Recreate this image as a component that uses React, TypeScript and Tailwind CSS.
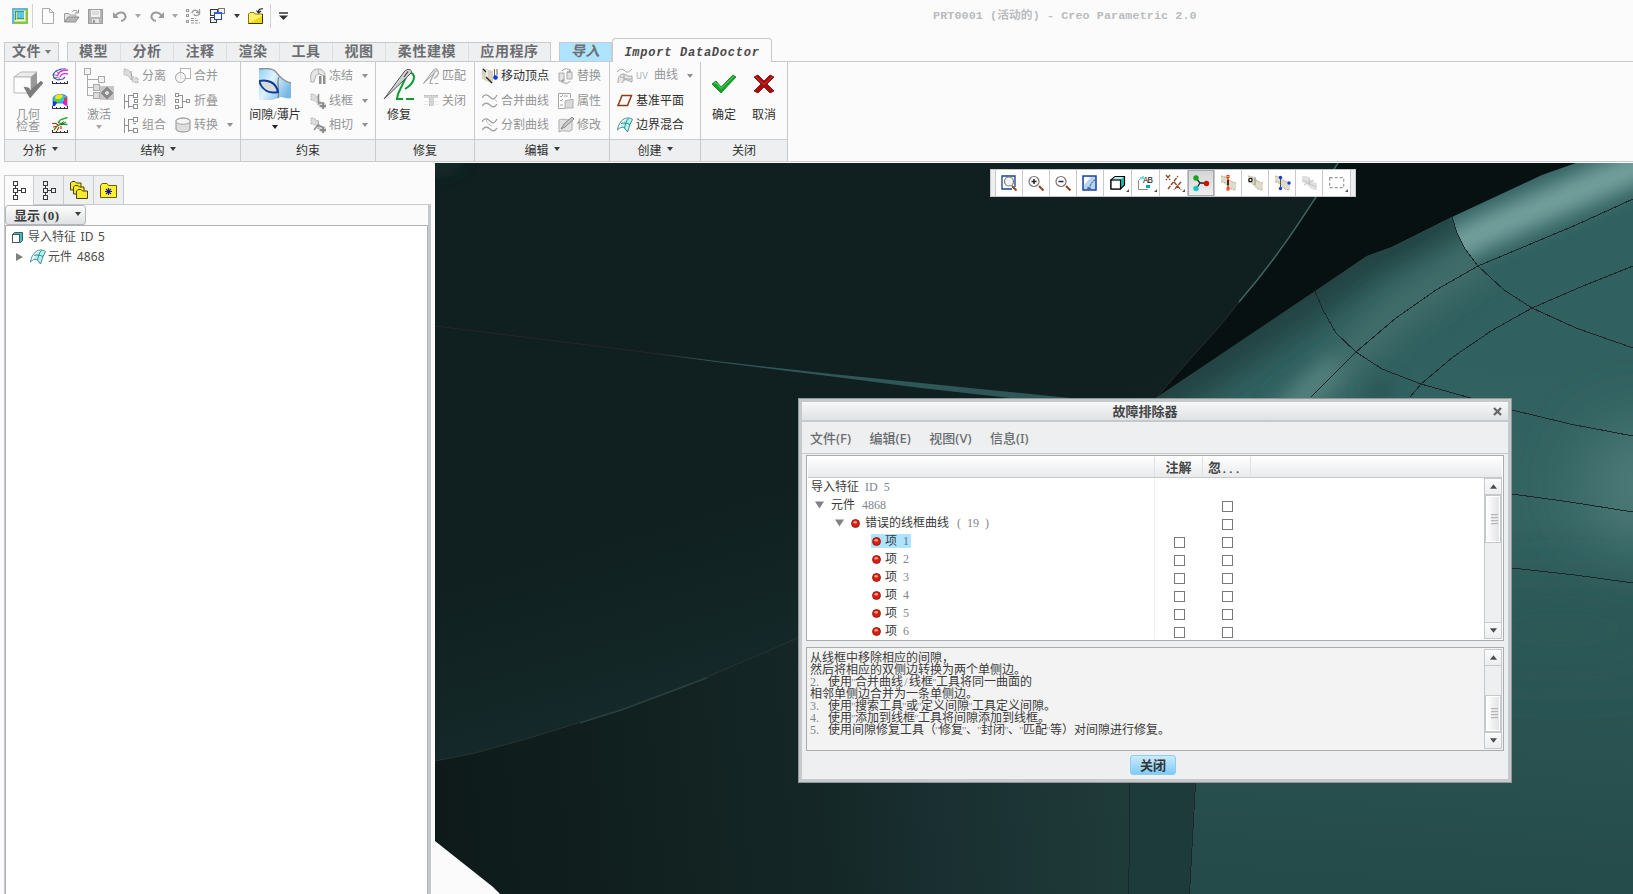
import React from "react";

type P = { className?: string };

const CJK = "font-['Liberation_Serif','Noto_Sans_CJK_SC',sans-serif]";

/* ---------- small helpers ---------- */

function Svg({ w = 16, h = 16, vw, vh, className = "", crisp = false, children }: {
  w?: number; h?: number; vw?: number; vh?: number; className?: string; crisp?: boolean; children: React.ReactNode;
}) {
  return (
    <svg
      width={w}
      height={h}
      viewBox={`0 0 ${vw ?? w} ${vh ?? h}`}
      fill="none"
      className={`shrink-0 ${className}`}
      shapeRendering={crisp ? "crispEdges" : undefined}
    >
      {children}
    </svg>
  );
}

function Down({ c = "#3b3b3b", className = "", w = 6, h = 4 }: { c?: string; w?: number; h?: number } & P) {
  return (
    <Svg w={w} h={h} vw={6} vh={4} className={className}>
      <path d="M0 0H6L3 4Z" fill={c} />
    </Svg>
  );
}

/* ---------- quick access icons ---------- */

const AppIcon = () => (
  <Svg crisp>
    <rect width="16" height="16" fill="#63b5dd" />
    <path d="M2 16V13H13V1H16V16Z" fill="#8bc53f" />
    <rect x="2" y="2" width="12" height="12" fill="#b9dc8c" />
    <rect x="3" y="3" width="10" height="10" fill="#f2fae6" />
    <rect x="3" y="3" width="9" height="9" fill="#2a8fc0" />
    <rect x="5" y="4" width="7" height="6" fill="#5ec6e4" />
    <path d="M4 4V11H12" stroke="#d9e85a" />
  </Svg>
);
const NewIcon = ({ className }: P) => (
  <Svg w={14} h={16} className={className}>
    <path d="M1.500 .5H8.500L12.500 4.500V15.500H1.500Z M8.500 .5V4.500H12.500" stroke="#a9abad" fill="#fff" />
  </Svg>
);
const OpenIcon = ({ className }: P) => (
  <Svg className={className}>
    <path d="M.5 14V5.500H5L6 7H12V9" stroke="#a0a0a0" fill="#e2e2e2" />
    <path d="M.5 14L4 9H15L11.500 14Z" fill="#b5b5b5" stroke="#8f8f8f" />
    <path d="M8 4C9 2 12 1.500 14 4.500M14.500 1.500V5H11" stroke="#8f8f8f" />
  </Svg>
);
const SaveIcon = ({ className }: P) => (
  <Svg className={className}>
    <rect x=".5" y="1.500" width="14" height="14" fill="#b3b5b7" stroke="#9a9c9e" />
    <rect x="3" y="2" width="9" height="7" fill="#f0f0f0" />
    <path d="M4 4H11M4 6H11" stroke="#c8c8c8" />
    <rect x="4" y="11" width="7" height="4" fill="#e4e4e4" />
    <rect x="5" y="12" width="2" height="3" fill="#999" />
  </Svg>
);
const UndoIcon = ({ className }: P) => (
  <Svg className={className}>
    <path d="M1 4V10H7Z" fill="#9b9b9b" />
    <path d="M3.500 7.500C6 4 11 3.500 13 6.500C14.600 9.500 12.500 12.500 9 13" stroke="#9b9b9b" strokeWidth="2" />
  </Svg>
);
const RegenIcon = ({ className }: P) => (
  <Svg className={className}>
    <g stroke="#999">
      <rect x=".5" y="1.500" width="2" height="2" /><rect x=".5" y="6.500" width="2" height="2" /><rect x=".5" y="12.500" width="2" height="2" />
      <path d="M5 10.500H10M5 12.500H13M5 15H14" strokeDasharray="3 1" />
      <path d="M6 5C7 1.500 10 1.500 12 3.500M13.500 1V4.500H10M14 5C13 8 9 8.500 7.500 6" strokeWidth="1.300" />
    </g>
  </Svg>
);
const WindowsIcon = ({ className }: P) => (
  <Svg className={className} crisp>
    <rect x=".5" y="1.500" width="7" height="6" fill="#eee" stroke="#3a3a3a" />
    <rect x="8.500" y=".5" width="6" height="5" fill="#eee" stroke="#777" />
    <rect x=".5" y="9.500" width="6" height="5" fill="#eee" stroke="#3a3a3a" />
    <rect x="4.500" y="4.500" width="7" height="7" fill="#fff" stroke="#1c49b8" />
    <rect x="4" y="4" width="8" height="2" fill="#2a62dc" />
  </Svg>
);
const CloseFolder = ({ className }: P) => (
  <Svg className={className}>
    <path d="M.5 15.500V6L2 4.500H6L7 6H14.500V15.500Z" fill="#fff36b" stroke="#8a7a00" />
    <path d="M1 15L14 15V8Z" fill="#ecd914" />
    <path d="M.5 15.500H14.500V6" stroke="#3d3600" />
    <path d="M15 .8C12 .5 10.500 1.500 10.500 4M8.500 2.500L10.500 5L13 3" stroke="#222" strokeWidth="1.200" />
  </Svg>
);

/* ---------- ribbon icons ---------- */

const GeomCheck = () => (
  <Svg w={30} h={30}>
    <path d="M1 8L8 3H24L18 8Z" fill="#ececec" stroke="#b9b9b9" />
    <path d="M1 8H18V24H1Z" fill="#fdfdfd" stroke="#b9b9b9" />
    <path d="M18 8L24 3V18L18 24Z" fill="#9a9a9a" />
    <path d="M11 18L16 19L17 22L28 12L30 14L17 29Z" fill="#7c7c7c" stroke="#696969" strokeWidth=".5" />
  </Svg>
);
const Comb = ({ children }: { children: React.ReactNode }) => (
  <Svg>
    {children}
    <path d="M0 15.500H16M.5 13V16M4.500 14V16M8.500 14V16M12.500 14V16M15.500 13V16" stroke="#333" />
  </Svg>
);
const CurvIcon = () => (
  <Comb>
    <path d="M14 1H9L4 3L1 6.500L2 10L6 12L11 11L13 9" stroke="#3a53c8" strokeWidth="1.100" />
    <path d="M8 1L10 4M4 3L7 5.500M1 6.500L5 7.500M2 10L6 9M7 12V9" stroke="#444" strokeWidth=".7" />
    <path d="M16 2C10 2 6 4 5.500 8" stroke="#e22be2" strokeWidth="1.400" />
    <path d="M16 6C12 5 9 6.500 8 9" stroke="#e22be2" strokeWidth="1.300" />
  </Comb>
);
const ColorMap = () => (
  <Comb>
    <path d="M1 13V5C2 1 13 0 15 4V13L11 10H5Z" fill="#2ac7e6" stroke="#2b57c9" strokeWidth=".7" />
    <path d="M3 4C5 1 10 1 11 3L8 6H4Z" fill="#ffe600" />
    <path d="M2 6H9L7 9H2Z" fill="#54d62c" />
    <path d="M1 8L5 9L3 13H1Z" fill="#1b34e0" />
    <path d="M11 8H15V13L11 11Z" fill="#e020c8" />
    <path d="M12 5L15 4V8H12Z" fill="#f33" />
  </Comb>
);
const DraftIcon = () => (
  <Comb>
    <path d="M15.500 .5L9 2.500L6 5.500M15.500 7.500L9 7L5 9L2 13" stroke="#1faa1f" strokeWidth="1.400" />
    <path d="M0 6.500H4L6 8M1 10L4 9.500M5 13.500L7 10M9 12V9" stroke="#e11" strokeWidth="1.100" />
    <path d="M6 5.500L9 6.500L12 4.500M9 8L14 5" stroke="#123a12" strokeWidth=".8" />
  </Comb>
);
const ActivateIcon = () => (
  <Svg w={30} h={32} crisp>
    <g stroke="#a8aaac" fill="#f3f3f3">
      <path d="M3.500 6V28M3 11.500H15M3 19.500H9M3 27.500H9" />
      <rect x=".5" y=".5" width="6" height="6" />
      <rect x="14.500" y="8.500" width="6" height="6" />
      <rect x="9.500" y="16.500" width="6" height="6" fill="#ddd" />
      <rect x="9.500" y="24.500" width="6" height="6" fill="#ddd" />
    </g>
    <rect x="16" y="18" width="14" height="14" fill="#c6c6c6" />
    <path d="M23 18.500L29.500 25L23 31.500L16.500 25Z" fill="#8b8b8b" />
    <path d="M23 22.500L25.500 25L23 27.500L20.500 25Z" fill="#ddd" />
  </Svg>
);
const GreySurf = ({ extra }: { extra?: React.ReactNode }) => (
  <Svg>
    <path d="M1 1C5 1 7 3 8 6C9 9 12 10 15 10V15C11 15 8 13 7 10C6 8 4 7 1 7Z" fill="#dcdcdc" stroke="#b4b4b4" strokeDasharray="2 1" />
    <path d="M8 3L9 12" stroke="#a5a5a5" />
    {extra}
  </Svg>
);
const SplitTree = ({ bot }: { bot?: boolean }) => (
  <Svg crisp>
    <g stroke="#8e9092">
      <path d="M1.500 1V16M1 8.500H5M5.500 2V15M5 2.500H11M5 13.500H11" />
      <rect x="10.500" y=".5" width="4" height="4" />
      <rect x="10.500" y="11.500" width="4" height="4" />
      {bot ? <path d="M10 6.500H13" /> : <rect x="11.500" y="6.500" width="3" height="3" />}
    </g>
  </Svg>
);
const CircleSquare = () => (
  <Svg>
    <rect x="5.500" y=".5" width="10" height="10" stroke="#b0b2b4" fill="#fff" />
    <circle cx="5.500" cy="9.500" r="5" stroke="#a0a2a4" fill="#f4f4f4" fillOpacity=".7" />
  </Svg>
);
const Collapse = () => (
  <Svg crisp>
    <g stroke="#8e9092">
      <rect x=".5" y=".5" width="3" height="3" /><rect x=".5" y="6.500" width="3" height="3" /><rect x=".5" y="12.500" width="3" height="3" />
      <path d="M3 2.500H7.500V14.500H3M7 8.500H11" />
      <rect x="11.500" y="6.500" width="3" height="3" />
    </g>
  </Svg>
);
const Convert = () => (
  <Svg>
    <path d="M1 4C1 0 15 0 15 4V12C15 16 1 16 1 12Z" stroke="#8f8f8f" fill="#dedede" />
    <ellipse cx="8" cy="4.300" rx="7" ry="3" stroke="#a5a5a5" fill="#f5f5f5" />
  </Svg>
);
const GapIcon = () => (
  <Svg w={32} h={32}>
    <defs>
      <linearGradient id="gp" x1="0" x2="1" y1="0" y2=".6">
        <stop offset="0" stopColor="#8fd0f3" />
        <stop offset=".45" stopColor="#dff3fd" />
        <stop offset="1" stopColor="#7ab9e6" />
      </linearGradient>
    </defs>
    <path d="M0 0C8 0 14 0 17 4C21 9 24 13 32 15V30C28 32 22 27 19 30C14 33 6 32 0 32Z" fill="url(#gp)" />
    <path d="M0 1C8 0 14 0 17 4C21 9 24 13 32 15" stroke="#8a9298" strokeWidth="1.400" />
    <path d="M20 9C17 13 21 22 19 30" stroke="#777f86" strokeWidth="1.200" />
    <path d="M0 13C8 11 17 14 19 24C10 26 3 22 0 13Z" fill="#d9dbdd" stroke="#0e3c9c" strokeWidth="2" />
  </Svg>
);
const Freeze = () => (
  <Svg>
    <path d="M1 14C0 7 1 1 8 1C12 1 15 3 15 8L9 6C5 6 5 11 4 14Z" stroke="#aaa" fill="#e6e6e6" />
    <path d="M8 1L9 6" stroke="#bbb" />
    <rect x="9" y="8" width="2.500" height="8" fill="#8f8f8f" /><rect x="13" y="8" width="2.500" height="8" fill="#8f8f8f" />
  </Svg>
);
const PlusSurf = ({ tri }: { tri?: boolean }) => (
  <GreySurf extra={<>
    <path d={tri ? "M4 13L8 8L14 11" : "M8.500 1V10M8 10H14"} stroke="#8c8c8c" strokeWidth="1.500" />
    <path d="M13 10V16M10 13H16" stroke="#8c8c8c" strokeWidth="2" />
  </>} />
);
const Needle = ({ grey, s = 32 }: { grey?: boolean; s?: number }) => (
  <Svg w={s} h={s} vw={32} vh={32}>
    <path d="M26 4C34 6 32 15 22 21M23 9L15 26L14 31M13 31H20M23 31H31" stroke={grey ? "#aaa" : "#0c9b35"} strokeWidth={grey ? 2.500 : 2} />
    <path d="M1 31L21 4C24 0 30 1 28 5L21 12Z" fill={grey ? "#e5e5e5" : "#cfd2d2"} stroke={grey ? "#999" : "#4c5454"} strokeWidth={grey ? 1.800 : 1} />
    <path d="M25 3.500L21 9" stroke={grey ? "#999" : "#3e4747"} strokeWidth="1.200" />
  </Svg>
);
const CloseGap = () => (
  <Svg crisp>
    <path d="M1 2H15V5H11V13H6V5H1Z" fill="#d4d4d4" />
    <path d="M1 2.500H15M6.500 5V13" stroke="#bdbdbd" strokeDasharray="2 1" />
    <path d="M1 8H5M12 8H15M1 11H5M12 11H15" stroke="#e8e8e8" />
  </Svg>
);
const MoveVertex = () => (
  <Svg>
    <path d="M0 0L11 3V15C7 15 3 12 0 11Z" fill="#d8d3c0" />
    <path d="M12.500 1V8M15 1V7" stroke="#6d6248" />
    <path d="M1 1L4 4M4 9L8 13L10 15" stroke="#222" strokeWidth="1.200" />
    <path d="M5 2V9" stroke="#fff" />
    <circle cx="13.500" cy="9.500" r="2.300" fill="#0a39d8" />
  </Svg>
);
const Waves = ({ cut }: { cut?: boolean }) => (
  <Svg>
    <path d="M0 5C2 1 5 1 8 4S13 6 15 2M0 13C3 9 6 10 8 12S13 15 15 11" stroke="#a2a2a2" strokeWidth="1.300" />
    {cut ? <path d="M5 1C3 6 8 8 10 9" stroke="#bbb" /> : <path d="M10 6C13 5 14 8 15 9" stroke="#b5b5b5" />}
  </Svg>
);
const Replace = () => (
  <Svg>
    <path d="M1 5H6V13H1ZM9 4H14V11H9Z" fill="#e3e3e3" stroke="#aaa" />
    <path d="M4 3C6 0 11 0 12 3M12 13C10 16 6 16 4 13M12 1V4H9M4 15V12H7" stroke="#9b9b9b" />
  </Svg>
);
const Props = () => (
  <Svg>
    <path d="M.5 .5H12.500V5M.5 .5V15.500H7" stroke="#a6a6a6" />
    <path d="M2 3L3 4L5 2M6 3H10M2 7L3 8L5 6M2 12H5" stroke="#a6a6a6" />
    <path d="M7 8L15 6V15H7Z" fill="#d8d8d8" stroke="#b0b0b0" />
  </Svg>
);
const Modify = () => (
  <Svg>
    <path d="M1 3C5 1 7 4 14 2V13C10 16 6 12 1 15Z" fill="#e2e2e2" stroke="#adadad" />
    <path d="M3 12L6 7L14 0L16 2L7 10Z" fill="#c8c8c8" stroke="#888" />
  </Svg>
);
const UVIcon = () => (
  <Svg>
    <path d="M0 4C3 0 6 1 8 3S13 4 15 1" stroke="#a2a2a2" />
    <path d="M1 15C1 9 3 6 6 6C9 6 10 9 15 8V14C11 13 10 11 7 12L5 15" stroke="#a6a6a6" fill="#e6e6e6" />
    <path d="M3 9C7 9 8 12 14 11M7 6V12" stroke="#a9a9a9" />
  </Svg>
);
const Plane = () => (
  <Svg>
    <path d="M5 2.500H14.500L10.500 12.500H1Z" stroke="#8b3c16" strokeWidth="1.500" />
  </Svg>
);
const Quilt = ({ className }: P) => (
  <Svg className={className}>
    <path d="M5 7C7 2 11 .5 15.500 2C15 4 14 5 13 7.500L10 15L7 11L3 10.500Z" fill="#b4f3f3" />
    <path d="M.5 13C1 8 3.500 4.500 6 2.500C9 .5 13 .5 15.500 2.500L13 7.500L10.500 15L7.500 11C5 9.500 3 10.500 .5 13ZM4 6.500C7 5.500 10 6 13 7.500M11.500 1.500C9 4 8.500 7 7.500 11" stroke="#2b7f82" strokeWidth=".9" />
  </Svg>
);
const Check = () => (
  <Svg w={26} h={22}>
    <path d="M1 11L5 8L10 14L22 2L25 4L10 20Z" fill="#17a42b" stroke="#0b7a1b" strokeWidth=".8" />
    <path d="M3 11L5 9.500L10 15.500L23 3" stroke="#55dc60" />
  </Svg>
);
const Cross = () => (
  <Svg w={22} h={20}>
    <path d="M1 3L5 1L11 7L17 1L21 3L14 10L21 17L17 19L11 13L5 19L1 17L8 10Z" fill="#a80d0d" stroke="#7d0404" strokeWidth=".8" />
    <path d="M3 3L11 10.500L19 3" stroke="#d23a34" />
  </Svg>
);

/* ---------- ribbon building blocks ---------- */

function Tool({ icon, label, on, arrow, className = "" }: { icon: React.ReactNode; label: React.ReactNode; on?: boolean; arrow?: boolean } & P) {
  return (
    <div className={`flex h-[24.5px] items-center whitespace-nowrap ${on ? "text-[#2f2f2f]" : "text-[#949597]"} ${className}`}>
      {icon}
      <span className="ml-[3px] text-xs leading-3">{label}</span>
      {arrow && <Down c="#8d8f91" className="ml-auto" />}
    </div>
  );
}

function Big({ icon, label, on, arrow, className = "" }: { icon: React.ReactNode; label: React.ReactNode; on?: boolean; arrow?: boolean } & P) {
  return (
    <div className={`flex shrink-0 flex-col items-center pt-1.5 ${on ? "text-[#2f2f2f]" : "text-[#949597]"} ${className}`}>
      <div className="flex h-8 items-center justify-center">{icon}</div>
      <div className="mt-[9px] text-center text-xs leading-3 whitespace-nowrap">{label}</div>
      {arrow && <Down c={on ? "#222" : "#a5a7a9"} className="mt-1" />}
    </div>
  );
}

function Group({ title, arrow, className, children }: { title: string; arrow?: boolean; className: string; children: React.ReactNode }) {
  return (
    <section className={`flex shrink-0 flex-col border-l border-[#c8cbce] ${className}`}>
      <div className="flex h-[77px]">{children}</div>
      <div className="flex h-[22px] items-center justify-center gap-[5px] border-t border-[#c8cbce] bg-[#edeff1] text-xs text-[#2f2f2f]">
        <span>{title}</span>
        {arrow && <Down className="mb-1" />}
      </div>
    </section>
  );
}

const Col = ({ className = "", children }: { children: React.ReactNode } & P) => (
  <div className={`flex shrink-0 flex-col pt-0.5 ${className}`}>{children}</div>
);

function Ribbon() {
  return (
    <div className="ml-1 flex h-[101px] border-y border-[#c8cbce]">
      <Group title="分析" arrow className="w-[71px]">
        <Big icon={<GeomCheck />} label={<>几何<br />检查</>} className="ml-2 w-[30px]" />
        <div className="ml-[9px] flex flex-col gap-[8.5px] pt-1.5"><CurvIcon /><ColorMap /><DraftIcon /></div>
      </Group>
      <Group title="结构" arrow className="w-[165px]">
        <Big icon={<ActivateIcon />} label="激活" arrow className="ml-2 w-[30px]" />
        <Col className="ml-[9px] w-[45px]">
          <Tool icon={<GreySurf />} label="分离" />
          <Tool icon={<SplitTree />} label="分割" />
          <Tool icon={<SplitTree bot />} label="组合" />
        </Col>
        <Col className="ml-[7px] w-[58px]">
          <Tool icon={<CircleSquare />} label="合并" />
          <Tool icon={<Collapse />} label="折叠" />
          <Tool icon={<Convert />} label="转换" arrow />
        </Col>
      </Group>
      <Group title="约束" className="w-[135px]">
        <Big on icon={<GapIcon />} label="间隙/薄片" arrow className="ml-[7px] w-[54px]" />
        <Col className="ml-2 w-[58px]">
          <Tool icon={<Freeze />} label="冻结" arrow />
          <Tool icon={<PlusSurf />} label="线框" arrow />
          <Tool icon={<PlusSurf tri />} label="相切" arrow />
        </Col>
      </Group>
      <Group title="修复" className="w-[99px]">
        <Big on icon={<Needle />} label="修复" className="ml-[7px] w-8" />
        <Col className="ml-2 w-[46px]">
          <Tool icon={<Needle grey s={16} />} label="匹配" />
          <Tool icon={<CloseGap />} label="关闭" />
        </Col>
      </Group>
      <Group title="编辑" arrow className="w-[135px]">
        <Col className="ml-[7px] w-[76px]">
          <Tool on icon={<MoveVertex />} label="移动顶点" />
          <Tool icon={<Waves />} label="合并曲线" />
          <Tool icon={<Waves cut />} label="分割曲线" />
        </Col>
        <Col className="w-[46px]">
          <Tool icon={<Replace />} label="替换" />
          <Tool icon={<Props />} label="属性" />
          <Tool icon={<Modify />} label="修改" />
        </Col>
      </Group>
      <Group title="创建" arrow className="w-[91px]">
        <Col className="ml-[7px] w-[76px]">
          <Tool icon={<UVIcon />} label={<><span className="mr-1.5 font-['Liberation_Mono',monospace] text-[10px] text-[#b2bac4]">UV</span>曲线</>} arrow />
          <Tool on icon={<Plane />} label="基准平面" />
          <Tool on icon={<Quilt />} label="边界混合" />
        </Col>
      </Group>
      <Group title="关闭" className="w-[88px] border-r">
        <Big on icon={<Check />} label="确定" className="ml-2.5 w-[26px]" />
        <Big on icon={<Cross />} label="取消" className="ml-3.5 w-[26px]" />
      </Group>
    </div>
  );
}

function Tabs() {
  const tabs: [string, string][] = [
    ["模型", "w-[53px]"], ["分析", "w-[53px]"], ["注释", "w-[53px]"], ["渲染", "w-[53px]"],
    ["工具", "w-[53px]"], ["视图", "w-[53px]"], ["柔性建模", "w-[83px]"], ["应用程序", "w-[82px]"],
  ];
  return (
    <div className="flex h-[23px] items-end pl-1 text-sm font-bold tracking-[0.6px] text-[#6c6d70]">
      <div className="flex h-[19px] w-[55px] items-center border border-b-0 border-[#c8cbce] bg-[#edeff1] pl-[7px]">
        <span className="leading-none">文件</span>
        <Down c="#77797b" className="ml-1" />
      </div>
      <div className="ml-2 flex h-[19px] border border-b-0 border-[#c8cbce] bg-[#edeff1]">
        {tabs.map(([t, w], i) => (
          <div key={t} className={`flex items-center justify-center leading-none ${w} ${i ? "border-l border-[#dcdfe2]" : "-ml-px"}`}>{t}</div>
        ))}
      </div>
      <div className="ml-2 flex h-[19px] w-[53px] items-center justify-center border border-b-0 border-[#c8cbce] bg-[#aee4ff] leading-none italic">导入</div>
      <div className="relative z-10 -mb-px flex h-6 w-[160px] items-center justify-center rounded-t-sm border border-b-0 border-[#c8cbce] bg-[#fbfbfb] pt-1 font-['Liberation_Mono',monospace] text-xs tracking-[0.75px] text-[#4a4a4c] italic">
        Import DataDoctor
      </div>
    </div>
  );
}

function TitleBar() {
  return (
    <div className="flex h-[38px] pt-0">
      <div className="flex h-8 w-[933px] items-center pl-3">
        <AppIcon />
        <div className="ml-1 h-6 w-px bg-[#d0d3d5]" />
        <NewIcon className="ml-2" />
        <OpenIcon className="ml-[9px]" />
        <SaveIcon className="ml-2" />
        <UndoIcon className="ml-2" />
        <Down c="#a4a6a8" className="ml-[7px]" />
        <UndoIcon className="ml-2 -scale-x-100" />
        <Down c="#a4a6a8" className="ml-[7px]" />
        <RegenIcon className="ml-2" />
        <WindowsIcon className="ml-2" />
        <Down className="ml-2" />
        <CloseFolder className="ml-2" />
        <div className="ml-[6px] h-6 w-px bg-[#d0d3d5]" />
        <Svg w={9} h={8} className="ml-2"><path d="M0 1H9" stroke="#333" strokeWidth="1.500" /><path d="M0 3.500H9L4.500 8Z" fill="#333" /></Svg>
      </div>
      <div className="h-8 font-['Liberation_Mono','Noto_Sans_CJK_SC',monospace] text-[11.7px] leading-8 font-bold tracking-[0.12px] whitespace-pre text-[#b9bbbe]">PRT0001 (活动的) - Creo Parametric 2.0</div>
    </div>
  );
}

/* ---------- sidebar ---------- */

const TreeIcon = () => (
  <Svg w={13} h={19} crisp>
    <g stroke="#3a3a3a">
      <rect x=".5" y=".5" width="4" height="4" /><rect x=".5" y="7.500" width="4" height="4" /><rect x=".5" y="14.500" width="4" height="4" />
      <path d="M2.500 5V7M2.500 12V14M5 9.500H8" /><rect x="8.500" y="7.500" width="4" height="4" />
    </g>
  </Svg>
);
const Folders = () => (
  <Svg w={18} h={18}>
    <g fill="#f7e92b" stroke="#4b4200">
      <path d="M.5 9V2L2 .5H5L6.500 2H11V9Z" />
      <path d="M3.500 13V6L5 4.500H8L9.500 6H14V13Z" />
      <path d="M6.500 17.500V10L8 8.500H11L12.500 10H17.500V17.500Z" />
    </g>
  </Svg>
);
const StarFolder = () => (
  <Svg w={17} h={15} vw={17} vh={15}>
    <path d="M.5 14.500V2.500L2 .5H7L8.500 2.500H16.500V14.500Z" fill="#fff22d" stroke="#6a5e00" />
    <path d="M8.500 5V12M5 8.500H12M6 6L11 11M11 6L6 11" stroke="#1414a8" strokeWidth="1.100" />
  </Svg>
);

function Sidebar() {
  const tab = "flex h-[30px] items-center justify-center border border-l-0 border-[#c8cbce]";
  return (
    <aside className="flex w-[431px] shrink-0 flex-col pt-[13px] pl-1">
      <div className="flex h-[30px]">
        <div className="flex w-[30px] items-center justify-center border border-b-0 border-[#c8cbce]"><TreeIcon /></div>
        <div className={`w-[30px] bg-[#edeff1] pl-0.5 ${tab}`}><TreeIcon /></div>
        <div className={`w-[30px] bg-[#edeff1] ${tab}`}><Folders /></div>
        <div className={`w-[30px] bg-[#edeff1] ${tab}`}><StarFolder /></div>
        <div className="flex-1 border-b border-[#c8cbce]" />
      </div>
      <div className="flex flex-1 flex-col border-r-[3px] border-l border-[#c5c9cc]">
        <div className="flex h-5">
          <div className="flex w-[81px] items-center rounded-[3px] border border-[#b4b6b9] bg-linear-to-b from-[#fdfdfd] to-[#dfe1e3] pl-2 text-[13px] leading-none font-bold text-[#3a3a3a]">
            显示<span className="ml-[3px] tracking-[0.5px]">(0)</span>
            <Down className="ml-auto mr-1 mb-0.5" />
          </div>
        </div>
        <div className="flex-1 border border-b-0 border-[#aeb0b3] bg-white pt-px font-['Noto_Sans','Noto_Sans_CJK_SC',sans-serif] text-xs text-[#4b4b4b]">
          <div className="flex h-5 items-center pl-1.5">
            <Svg w={11} h={11} className="mr-[5px]">
              <path d="M.5 2.500L2.500 .5H10.500V8.500L8.500 10.500H.5Z" fill="#2fc4c4" stroke="#456" />
              <rect x=".5" y="2.500" width="7" height="8" fill="#fff" stroke="#555" />
            </Svg>
            <span className="leading-none [word-spacing:1.5px]">导入特征 ID 5</span>
          </div>
          <div className="flex h-5 items-center pl-[10px]">
            <Svg w={7} h={8}><path d="M0 0L7 4L0 8Z" fill="#7f8183" /></Svg>
            <Quilt className="mr-0.5 ml-[7px]" />
            <span className="leading-none [word-spacing:1.5px]">元件 <span className="tracking-[0.15px]">4868</span></span>
          </div>
        </div>
      </div>
    </aside>
  );
}

/* ---------- model viewport ---------- */

function Model() {
  return (
    <svg width="1198" height="731" viewBox="435 163 1198 731" className="block">
      <defs>
        <linearGradient id="lower" gradientUnits="userSpaceOnUse" x1="435" y1="840" x2="1129" y2="780">
          <stop offset="0" stopColor="#0d1a19" />
          <stop offset=".3" stopColor="#112120" />
          <stop offset=".55" stopColor="#142726" />
          <stop offset=".7" stopColor="#192e30" />
          <stop offset="1" stopColor="#1f3b3a" />
        </linearGradient>
        <linearGradient id="upper" gradientUnits="userSpaceOnUse" x1="600" y1="520" x2="660" y2="720">
          <stop offset="0" stopColor="#101f1f" />
          <stop offset=".5" stopColor="#122424" />
          <stop offset="1" stopColor="#152a2b" />
        </linearGradient>
        <linearGradient id="body" gradientUnits="userSpaceOnUse" x1="1420" y1="340" x2="1380" y2="894">
          <stop offset="0" stopColor="#30605f" />
          <stop offset=".3" stopColor="#346462" />
          <stop offset=".47" stopColor="#2d5958" />
          <stop offset="1" stopColor="#244a49" />
        </linearGradient>
        <filter id="b10" filterUnits="userSpaceOnUse" x="400" y="100" width="1400" height="850"><feGaussianBlur stdDeviation="10" /></filter>
        <filter id="b14" filterUnits="userSpaceOnUse" x="400" y="100" width="1400" height="850"><feGaussianBlur stdDeviation="15" /></filter>
        <filter id="b30" filterUnits="userSpaceOnUse" x="400" y="100" width="1500" height="900"><feGaussianBlur stdDeviation="32" /></filter>
        <clipPath id="edge"><path d="M1156 398L1314 292L1367 256L1392 247L1452 217L1542 175L1576 163H1633V894H1129V398Z" /></clipPath>
        <clipPath id="patchR"><path d="M1452 217L1457 233L1465 249L1478 266L1504 290L1532 308L1576 328L1633 348V150H1452Z" /></clipPath>
        <clipPath id="patchL"><path d="M1452 217L1457 233L1465 249L1478 266L1504 290L1532 308L1532 420H1100V217Z" /></clipPath>
      </defs>
      <rect x="435" y="163" width="1198" height="731" fill="url(#upper)" />
      <ellipse cx="437" cy="161" rx="26" ry="10" fill="#17302f" filter="url(#b10)" />
      <path d="M435 761L475 753L533 737L622 709L707 677L798 638L1129 500V894H435Z" fill="url(#lower)" />
      <path d="M1338 163H1576L1542 175L1452 217L1392 247L1367 256L1314 292L1156 398L1192 357L1219 327L1239 302L1263 275L1300 220L1316 197Z" fill="#081112" />
      <g clipPath="url(#edge)">
        <rect x="1120" y="160" width="520" height="740" fill="url(#body)" />
        <path d="M1129 780H1195L1189 900H1129Z" fill="#1e3b3b" />
        <g clipPath="url(#patchL)">
          <path d="M1100 430L1314 285L1367 248L1460 205" stroke="#204342" strokeWidth="60" fill="none" filter="url(#b14)" />
          <path d="M1290 425L1356 350L1400 308L1500 240" stroke="#456f6d" strokeWidth="34" fill="none" filter="url(#b14)" />
          <path d="M1275 425L1308 390L1335 365" stroke="#5b8a87" strokeWidth="16" fill="none" filter="url(#b10)" />
          <path d="M1370 400L1390 380" stroke="#2b5553" strokeWidth="20" fill="none" filter="url(#b10)" />
        </g>
        <g clipPath="url(#patchR)">
          <path d="M1420 265L1480 233L1560 199L1700 140" stroke="#74a09e" strokeWidth="34" fill="none" filter="url(#b10)" />
        </g>
        <ellipse cx="1645" cy="485" rx="62" ry="60" fill="#4d7c79" filter="url(#b30)" />
        <ellipse cx="1560" cy="630" rx="130" ry="30" fill="#2c5857" filter="url(#b30)" />
      </g>
      <g fill="none" stroke="#202529" shapeRendering="crispEdges">
        <path d="M1452 217L1457 233L1465 249L1478 266L1504 290L1532 308L1576 328L1633 348" />
        <path d="M1315 291L1323 310L1336 333L1356 352L1382 369L1421 384L1467 397L1512 410L1570 424L1633 436" />
        <path d="M1633 199L1576 225L1478 266L1436 290L1396 318L1356 352L1311 397" />
        <path d="M1633 266L1583 286L1532 308L1491 331L1453 357L1421 384L1410 397" />
        <path d="M1512 494L1570 502L1633 512M1512 568L1575 575L1633 583" />
        <path d="M1129.500 783V840L1128.500 894M1195.500 783L1189.500 894" />
      </g>
      <path d="M1338 163L1316 197C1295 229 1275 260 1239 302" stroke="#3f6563" strokeWidth="1.500" fill="none" />
      <path d="M1239 302L1219 327L1192 357L1156 398" stroke="#2b2c2e" fill="none" />
      <path d="M435 326L540 339L635 351L716 361" stroke="#292527" fill="none" />
      <path d="M650 353L716 361L832 374L921 383L1000 391L1070 398H1010L921 388L832 376.500L716 362Z" fill="#2f5757" />
      <path d="M435 761L475 753L533 737L622 709L707 677L798 638" stroke="#2a3232" fill="none" />
      <path d="M580 723L622 710L707 678" stroke="#284846" strokeWidth="1.300" fill="none" />
      <path d="M435 841L493 887L500 894H435Z" fill="#fbfbfb" />
    </svg>
  );
}

/* ---------- in-graphics toolbar ---------- */

const Zoom = ({ sign, box }: { sign?: string; box?: boolean }) => (
  <Svg w={18} h={18}>
    {box && <path d="M15 13V2H2V15H12" stroke="#16418c" strokeWidth="1.300" />}
    <circle cx={box ? 9 : 7} cy="7.500" r={box ? 4.500 : 5} stroke="#777" strokeWidth="1.200" fill={box ? "#f3f3f3" : "#fff"} />
    {sign && <path d={sign} stroke="#222" strokeWidth="1.500" />}
    <path d="M12 12L16.500 16.500" stroke="#8a4422" strokeWidth="2" />
  </Svg>
);
const Tan = () => (
  <>
    <path d="M1 2H6C8 5 12 8 16 9V16C11 16 9 14 7 11L1 8Z" fill="#dfdccb" />
    <path d="M1 8C4 7 6 9 7 11S11 16 16 16M1 2C6 2 9 8 16 9" stroke="#b5b29d" strokeDasharray="2 1" />
  </>
);
const viewIcons: { w: string; corner?: boolean; on?: boolean; icon: React.ReactNode }[] = [
  { w: "w-[27px]", icon: <Zoom box /> },
  { w: "w-[27px]", icon: <Zoom sign="M4.500 7.500H9.500M7 5V10" /> },
  { w: "w-[27px]", icon: <Zoom sign="M4.500 7.500H9.500" /> },
  { w: "w-[27px]", icon: <Svg w={16} h={17}><rect x="1" y="1" width="13" height="14" fill="#b7d4f2" stroke="#1a459c" strokeWidth="1.500" /><path d="M2 2H9L2 10Z" fill="#fff" /><path d="M13 5C10 6 9 10 6 14M9 13L6 14L6 11" stroke="#27487e" strokeDasharray="2 1" /></Svg> },
  { w: "w-[28px]", corner: true, icon: <Svg w={16} h={16}><path d="M1 5L5 1.500H14.500V10L10.500 14H1Z" fill="#17bcbc" stroke="#000" strokeWidth="1.200" /><path d="M2 5H10L14 2H5Z" fill="#a6f5f5" /><rect x="1" y="5" width="9.500" height="9" fill="#fff" stroke="#000" strokeWidth="1.200" /></Svg> },
  { w: "w-[28px]", corner: true, icon: <Svg w={17} h={18}><path d="M5 3L1.500 6.500V15.500H11M5 3H7" stroke="#888" /><path d="M3 4H7" stroke="#4ee" strokeWidth="2" /><rect x="9" y="11" width="4" height="3" fill="#0aa" /><text x="6" y="8.500" fontSize="9" fill="#111" fontFamily="Liberation Mono, monospace" textLength="10">AB</text></Svg> },
  { w: "w-[28px]", corner: true, icon: <Svg w={18} h={18}><path d="M1 1L5 6M5 1L1 6M3 15L13 2M9 8L16 16M16 8L9 16" stroke="#8b4a26" strokeWidth="1.400" strokeDasharray="4 1" /></Svg> },
  { w: "w-[27px]", on: true, icon: <Svg w={18} h={17}><path d="M4 3L8 8L4 14M8 8H14" stroke="#222" strokeWidth="1.300" /><circle cx="4" cy="3" r="2.700" fill="#13a813" /><circle cx="4" cy="13.500" r="2.700" fill="#19c5c5" /><circle cx="14.500" cy="8.500" r="2.700" fill="#d40d0d" /></Svg> },
  { w: "w-[27px]", icon: <Svg w={17} h={18}><Tan /><path d="M8 2V15" stroke="#e64a12" strokeWidth="1.500" /><path d="M8 6V11" stroke="#111" strokeWidth="1.500" /><rect x="7" y="1.500" width="2" height="2" fill="#ffb21a" stroke="#e6330d" /><rect x="7" y="14" width="2" height="2" fill="#ffb21a" stroke="#e6330d" /></Svg> },
  { w: "w-[27px]", icon: <Svg w={17} h={18}><Tan /><path d="M8 3V11" stroke="#888" /><circle cx="3.500" cy="6" r="1.700" stroke="#111" strokeWidth="1.200" fill="#fff" /></Svg> },
  { w: "w-[27px]", icon: <Svg w={17} h={18}><Tan /><path d="M6.500 3V14" stroke="#555" /><circle cx="6.500" cy="3.500" r="1.700" fill="#113be0" /><circle cx="6.500" cy="14.500" r="1.700" fill="#113be0" /><circle cx="15" cy="9" r="1.700" fill="#113be0" /></Svg> },
  { w: "w-[27px]", icon: <Svg w={17} h={18}><g opacity=".7"><path d="M1 2H6C8 5 12 8 16 9V16C11 16 9 14 7 11L1 8Z" fill="#d5d5d5" /><path d="M2 6L15 13M8 3V12M3 11L13 6" stroke="#aaa" /></g></Svg> },
  { w: "w-[28px]", corner: true, icon: <Svg w={16} h={13}><rect x=".7" y=".7" width="14" height="10" stroke="#999" strokeWidth="1.200" strokeDasharray="3 2" /></Svg> },
];

function ViewToolbar() {
  return (
    <div className="absolute top-1.5 left-[555px] flex h-7 border border-[#c5c9cc] bg-[#edeff1]">
      <div className="w-1" />
      {viewIcons.map((v, i) => (
        <div key={i} className={`relative flex items-center justify-center border-l border-[#c5c9cc] ${v.w} ${v.on ? "bg-linear-to-b from-[#d2d4d6] to-[#eef0f1] ring-1 ring-[#a7a9ac] ring-inset" : "bg-white"}`}>
          {v.icon}
          {v.corner && <svg width="3" height="3" className="absolute right-0.5 bottom-1"><path d="M3 0V3H0Z" fill="#555" /></svg>}
        </div>
      ))}
      <div className="w-[5px] border-l border-[#c5c9cc]" />
    </div>
  );
}

/* ---------- troubleshooter dialog ---------- */

const Ball = ({ className = "" }: P) => (
  <Svg w={9} h={9} className={className}>
    <circle cx="4.500" cy="4.500" r="4" fill="#d9200f" stroke="#8e0e05" strokeWidth=".8" />
    <ellipse cx="4.200" cy="3.200" rx="1.800" ry="1.200" fill="#ff9f90" />
  </Svg>
);
const Tri = () => <Svg w={9} h={8}><path d="M0 .5H9L4.500 7.500Z" fill="#808285" /></Svg>;
const Box = () => <div className="h-[11px] w-[11px] border border-[#77797c] bg-white" />;
const Lat = ({ children, className = "", tone = "text-[#7f858e]" }: { children: React.ReactNode; tone?: string } & P) => (
  <span className={`whitespace-pre ${tone} ${className}`}>{children}</span>
);

function Scroll({ before, thumb }: { before: string; thumb: string }) {
  const btn = "flex h-4 shrink-0 items-center justify-center bg-linear-to-b from-[#fbfbfb] to-[#eceef0]";
  return (
    <div className="flex w-[18px] shrink-0 flex-col border border-[#c5c9cc] bg-[#edeff1]">
      <div className={`${btn} border-b border-[#c5c9cc]`}><Down c="#4a4d52" w={7} h={5} className="rotate-180" /></div>
      <div className={before} />
      <div className={`flex shrink-0 flex-col items-center justify-center gap-px border border-[#c5c9cc] bg-linear-to-r from-white to-[#e2e2e2] ring-1 ring-white ring-inset ${thumb}`}>
        {[0, 1, 2, 3].map((n) => <div key={n} className="ml-0.5 h-0.5 w-[7px] border-t border-[#b3b5b7] bg-[#e2e2e2]" />)}
      </div>
      <div className="flex-1" />
      <div className={`${btn} border-t border-[#c5c9cc]`}><Down c="#4a4d52" w={7} h={5} /></div>
    </div>
  );
}

function Row({ children, a, b }: { children: React.ReactNode; a?: boolean; b?: boolean }) {
  return (
    <div className="flex h-[18px] shrink-0">
      <div className="flex w-[346px] items-center border-r border-[#edeff4] pl-0.5 leading-[14px]">{children}</div>
      <div className="flex w-12 items-center justify-center pt-[3px]">{a && <Box />}</div>
      <div className="flex w-12 items-center justify-center pt-[3px]">{b && <Box />}</div>
    </div>
  );
}

const Q = () => <span className="inline-block w-[3px] text-[11px] text-[#8b9098] [text-indent:-1px]">"</span>;
const N = ({ n }: { n: number }) => <Lat className="inline-block w-[18px]">{n}.</Lat>;

function Dialog() {
  return (
    <div className="absolute top-[235px] left-[363px] flex h-[385px] w-[714px] flex-col border border-[#94979a] bg-[#c5c9cc] p-[3px] text-xs text-[#3a3a3a]">
      <div className="flex h-[18px] shrink-0 items-center bg-linear-to-b from-[#f7f8f8] to-[#dfe2e4] text-[13px] leading-none font-bold text-[#444547]">
        <div className="w-[691px] pr-[5px] text-center">故障排除器</div>
        <Svg w={9} h={9}><path d="M1 1L8 8M8 1L1 8" stroke="#66686b" strokeWidth="2.300" /></Svg>
      </div>
      <div className="mt-0.5 flex flex-1 flex-col bg-[#edeff1]">
        <div className="flex h-8 shrink-0 items-center gap-[18.5px] border-b border-[#c5c9cc] pt-0.5 pl-2 font-['Noto_Sans','Noto_Sans_CJK_SC',sans-serif] text-[13px] font-medium text-[#6a6c70]">
          <span>文件(F)</span><span>编辑(E)</span><span>视图(V)</span><span>信息(I)</span>
        </div>
        <div className="mx-1 mt-px flex h-[186px] shrink-0 flex-col border border-[#aaacaf] bg-white p-px pr-px">
          <div className="flex h-[21px] shrink-0 border-b border-[#c5c9cc] bg-linear-to-b from-white to-[#e9eaec] text-[13px] font-bold text-[#444547]">
            <div className="w-[347px] border-r border-[#dfe1e4]" />
            <div className="flex w-12 items-center justify-center border-r border-[#dfe1e4] pt-px leading-none">注解</div>
            <div className="flex w-12 items-center border-r border-[#dfe1e4] pt-px pl-[5px] leading-none">忽<span className="mt-1.5 font-['Liberation_Mono',monospace] text-[11px]">...</span></div>
          </div>
          <div className="flex flex-1 overflow-hidden">
            <div className="flex flex-1 flex-col pl-px">
              <Row>导入特征<Lat className="ml-1.5">ID  5</Lat></Row>
              <Row b><span className="ml-1"><Tri /></span><span className="ml-[7px]">元件</span><Lat className="ml-[7px]">4868</Lat></Row>
              <Row b><span className="ml-6"><Tri /></span><Ball className="ml-[7px]" /><span className="ml-[5px]">错误的线框曲线</span><Lat className="ml-2">(  19  )</Lat></Row>
              {[1, 2, 3, 4, 5, 6].map((n) => (
                <Row key={n} a b>
                  <div className={`ml-[60px] flex h-[14px] w-10 items-center ${n === 1 ? "bg-[#aee4ff]" : ""}`}>
                    <Ball className="ml-px" />
                    <span className="ml-1">项</span>
                    <Lat className="ml-1.5" tone={n === 1 ? "text-[#5d7484]" : "text-[#7f858e]"}>{n}</Lat>
                  </div>
                </Row>
              ))}
            </div>
            <Scroll before="h-0" thumb="h-[48px]" />
          </div>
        </div>
        <div className="mx-1 mt-1.5 flex h-[104px] shrink-0 border border-[#aaacaf] bg-[#f3f3f3] p-px">
          <div className="flex-1 pt-[3px] pl-[2px] leading-3 whitespace-nowrap">
            <div className="h-3">从线框中移除相应的间隙，</div>
            <div className="h-3">然后将相应的双侧边转换为两个单侧边。</div>
            <div className="h-3"><N n={2} />使用<Q />合并曲线<Lat className="inline-block w-1.5 text-center">/</Lat>线框<Q />工具将同一曲面的</div>
            <div className="h-3">相邻单侧边合并为一条单侧边。</div>
            <div className="h-3"><N n={3} />使用<Q />搜索工具<Q />或<Q />定义间隙<Q />工具定义间隙。</div>
            <div className="h-3"><N n={4} />使用<Q />添加到线框<Q />工具将间隙添加到线框。</div>
            <div className="h-3"><N n={5} />使用间隙修复工具（<Q />修复<Q />、<Q />封闭<Q />、<Q />匹配<Q />等）对间隙进行修复。</div>
          </div>
          <Scroll before="h-[29px]" thumb="h-[37px]" />
        </div>
        <div className="flex justify-center pt-1">
          <button className="ml-[-4px] flex h-5 w-[46px] items-center justify-center rounded-[3px] border border-[#8ecdf0] bg-linear-to-b from-[#c9ebfe] to-[#7ecbf8] text-[13px] leading-none font-bold text-[#333]">关闭</button>
        </div>
      </div>
    </div>
  );
}

export default function App() {
  return (
    <div className={`flex h-[894px] w-[1633px] flex-col overflow-hidden bg-[#fbfbfb] ${CJK}`}>
      <TitleBar />
      <Tabs />
      <Ribbon />
      <main className="flex flex-1">
        <Sidebar />
        <div className="relative mt-px ml-1 h-[731px] w-[1198px] overflow-hidden">
          <Model />
          <ViewToolbar />
          <Dialog />
        </div>
      </main>
    </div>
  );
}
